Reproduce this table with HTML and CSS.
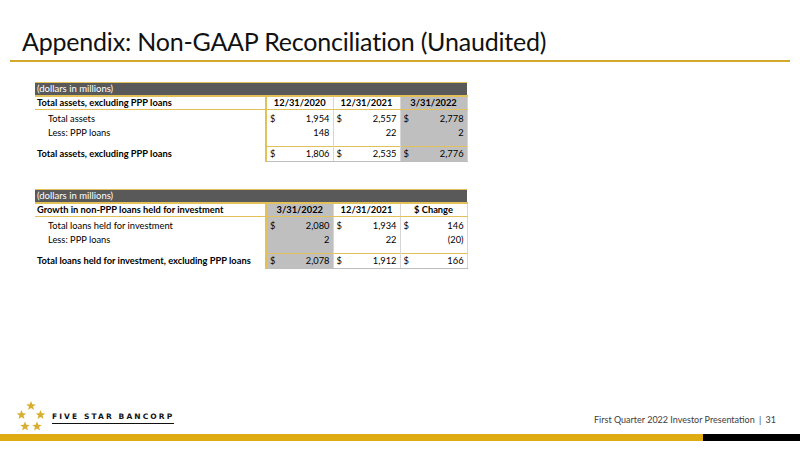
FILE: index.html
```html
<!DOCTYPE html>
<html>
<head>
<meta charset="utf-8">
<link rel="stylesheet" href="styles.css">
</head>
<body>
<div class="slide">
  <header class="head">
    <h1 class="title">Appendix: Non-GAAP Reconciliation (Unaudited)</h1>
    <div class="rule"></div>
  </header>

  <main class="content">
    <table class="recon">
      <colgroup>
        <col class="c-label"><col class="c-num"><col class="c-num"><col class="c-num">
      </colgroup>
      <tr class="band"><td colspan="4">(dollars in millions)</td></tr>
      <tr class="hdr">
        <th class="lbl">Total assets, excluding PPP loans</th>
        <th class="first">12/31/2020</th>
        <th>12/31/2021</th>
        <th class="shade">3/31/2022</th>
      </tr>
      <tr class="row r1">
        <td class="ind">Total assets</td>
        <td class="num first"><span class="cur">$</span>1,954</td>
        <td class="num"><span class="cur">$</span>2,557</td>
        <td class="num shade"><span class="cur">$</span>2,778</td>
      </tr>
      <tr class="row">
        <td class="ind">Less: PPP loans</td>
        <td class="num first">148</td>
        <td class="num">22</td>
        <td class="num shade">2</td>
      </tr>
      <tr class="spacer"><td></td><td class="first"></td><td></td><td class="shade"></td></tr>
      <tr class="total">
        <td class="lbl">Total assets, excluding PPP loans</td>
        <td class="num first"><span class="cur">$</span>1,806</td>
        <td class="num"><span class="cur">$</span>2,535</td>
        <td class="num shade"><span class="cur">$</span>2,776</td>
      </tr>
    </table>

    <table class="recon">
      <colgroup>
        <col class="c-label"><col class="c-num"><col class="c-num"><col class="c-num">
      </colgroup>
      <tr class="band"><td colspan="4">(dollars in millions)</td></tr>
      <tr class="hdr">
        <th class="lbl">Growth in non-PPP loans held for investment</th>
        <th class="first shade">3/31/2022</th>
        <th>12/31/2021</th>
        <th>$ Change</th>
      </tr>
      <tr class="row r1">
        <td class="ind">Total loans held for investment</td>
        <td class="num first shade"><span class="cur">$</span>2,080</td>
        <td class="num"><span class="cur">$</span>1,934</td>
        <td class="num"><span class="cur">$</span>146</td>
      </tr>
      <tr class="row">
        <td class="ind">Less: PPP loans</td>
        <td class="num first shade">2</td>
        <td class="num">22</td>
        <td class="num">(20)</td>
      </tr>
      <tr class="spacer"><td></td><td class="first shade"></td><td></td><td></td></tr>
      <tr class="total">
        <td class="lbl">Total loans held for investment, excluding PPP loans</td>
        <td class="num first shade"><span class="cur">$</span>2,078</td>
        <td class="num"><span class="cur">$</span>1,912</td>
        <td class="num"><span class="cur">$</span>166</td>
      </tr>
    </table>
  </main>

  <footer class="foot">
    <div class="foot-row">
      <div class="logo">
        <svg class="stars" width="30" height="31" viewBox="0 0 30 31">
          <g fill="#D9AE2E">
            <polygon points="15,0 16.3,3.3 19.8,3.4 17,5.6 18,9 15,7 12,9 13,5.6 10.2,3.4 13.7,3.3"/>
            <polygon points="5.5,9 6.8,12.3 10.3,12.4 7.5,14.6 8.5,18 5.5,16 2.5,18 3.5,14.6 0.7,12.4 4.2,12.3"/>
            <polygon points="24.5,9 25.8,12.3 29.3,12.4 26.5,14.6 27.5,18 24.5,16 21.5,18 22.5,14.6 19.7,12.4 23.2,12.3"/>
            <polygon points="9,20.5 10.3,23.8 13.8,23.9 11,26.1 12,29.5 9,27.5 6,29.5 7,26.1 4.2,23.9 7.7,23.8"/>
            <polygon points="21,20.5 22.3,23.8 25.8,23.9 23,26.1 24,29.5 21,27.5 18,29.5 19,26.1 16.2,23.9 19.7,23.8"/>
          </g>
        </svg>
        <span class="brand">FIVE STAR BANCORP</span>
      </div>
      <div class="pres">First Quarter 2022 Investor Presentation <span class="bar">|</span> 31</div>
    </div>
    <div class="stripe"><div class="gold"></div><div class="black"></div></div>
  </footer>
</div>
</body>
</html>
```

FILE: styles.css
```css
html, body {
  margin: 0;
  padding: 0;
  background: #fff;
}
.slide {
  width: 800px;
  height: 449px;
  display: flex;
  flex-direction: column;
  font-family: Lato, "Noto Sans", sans-serif;
  color: #000;
  overflow: hidden;
}
.head {
  padding-top: 25px;
}
.title {
  margin: 0 0 0 22px;
  font-weight: 400;
  font-size: 25px;
  line-height: 33px;
  letter-spacing: -0.2px;
  color: #111;
}
.rule {
  margin: 2px 10px 0 10px;
  height: 2px;
  background: #D4A92A;
}
.content {
  padding: 20px 0 0 35px;
  display: flex;
  flex-direction: column;
  gap: 27px;
}
.recon {
  width: 432px;
  border-collapse: collapse;
  table-layout: fixed;
  font-size: 9.3px;
}
.c-label { width: 231px; }
.c-num { width: 67px; }
.recon td, .recon th {
  padding: 0 3px;
  white-space: nowrap;
  overflow: hidden;
}
.band td {
  background: #595959;
  color: #fff;
  height: 11px;
  line-height: 12px;
  border-top: 1px solid #E3C15A;
  border-bottom: 2px solid #E3C15A;
  padding-left: 2px;
  font-size: 9.5px;
}
.hdr th {
  height: 12px;
  line-height: 12px;
  font-weight: 700;
  text-align: center;
  border-bottom: 1px solid #E3C15A;
  border-left: 1px solid #D6D6D6;
}
.hdr th.lbl {
  text-align: left;
  border-left: none;
  padding-left: 2px;
}
.recon .first {
  border-left: 2px solid #E3C15A;
}
.recon td.num { border-left: 1px solid #D6D6D6; text-align: right; }
.recon td.num.first { border-left: 2px solid #E3C15A; }
.spacer td.first { border-left: 2px solid #E3C15A; }
.spacer td + td + td { border-left: 1px solid #D6D6D6; }
.hdr th:last-child, .row td:last-child, .total td:last-child, .spacer td:last-child {
  border-right: 1px solid #D6D6D6;
}
.shade { background: #BFBFBF; }
.row td {
  height: 14px;
  line-height: 14px;
}
.r1 td { padding-top: 2px; }
.ind { padding-left: 13px !important; }
.spacer td { height: 6px; }
.total td {
  height: 14px;
  line-height: 14px;
  border-top: 1px solid #E3C15A;
  border-bottom: 1px solid #BDBDBD;
}
.total td.lbl {
  font-weight: 700;
  padding-left: 2px;
  border-bottom: none;
  border-top: none;
}
.cur { float: left; }

.foot {
  margin-top: auto;
}
.foot-row {
  display: flex;
  align-items: flex-end;
  justify-content: space-between;
  padding: 0 24px 2px 16px;
}
.logo {
  display: flex;
  align-items: center;
  gap: 6px;
}
.stars { display: block; }
.brand {
  font-family: "DejaVu Sans", Lato, sans-serif;
  font-weight: 700;
  font-size: 7.5px;
  letter-spacing: 2.1px;
  color: #111;
  border-bottom: 1px solid #111;
  padding-bottom: 2px;
  margin-top: 2px;
}
.pres {
  font-size: 9px;
  color: #404040;
  padding-bottom: 7px;
}
.bar { padding: 0 2px; }
.stripe {
  display: flex;
  height: 7px;
  margin-bottom: 8px;
}
.gold { width: 703px; background: #DEAC12; }
.black { flex: 1; background: #000; }
```
